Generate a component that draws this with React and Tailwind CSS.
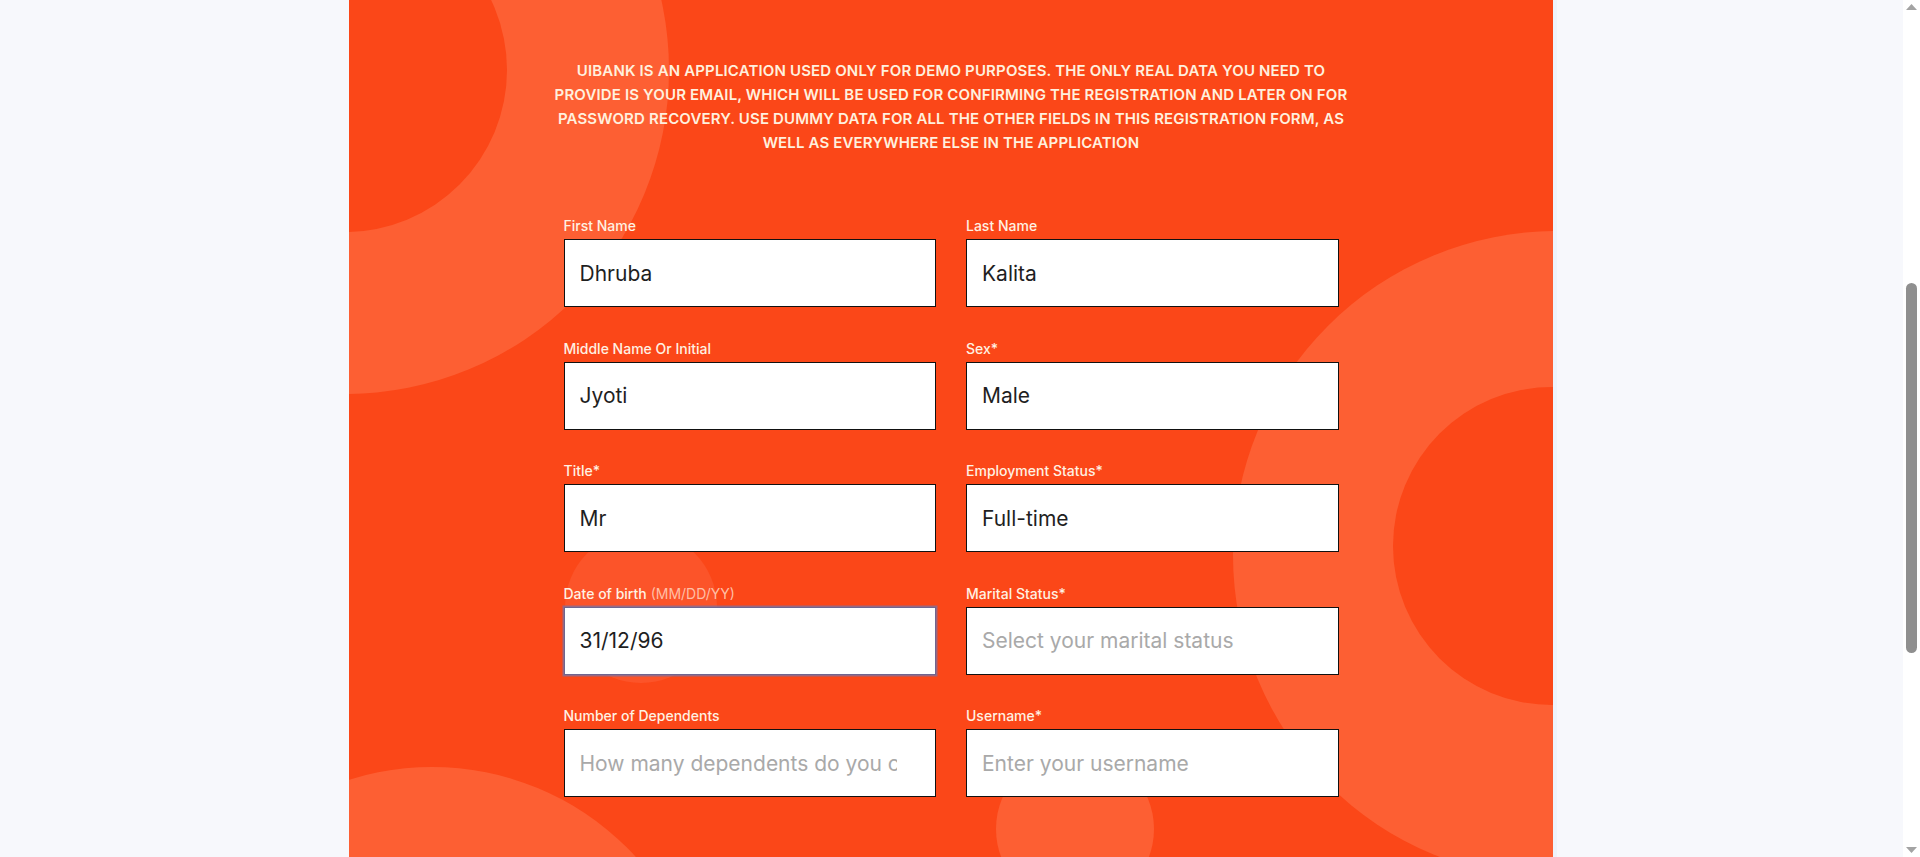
import React from "react";

const font = { fontFamily: "Inter, 'Open Sans', 'Noto Sans', sans-serif" };

function Field({ label, hint, value, placeholder, focused }) {
  return (
    <div className="flex flex-col">
      <label className="mb-[3px] text-[14px] font-medium leading-[20px] text-[#fff1e2]">
        {label}
        {hint ? <span className="font-normal text-[#ffbfa6]"> {hint}</span> : null}
      </label>
      <input
        readOnly
        defaultValue={value}
        placeholder={placeholder}
        className={
          "h-[68px] w-full bg-white pl-[15px] pr-[38px] text-[21px] text-[#1f1f1f] outline-none placeholder:text-[#a9a9a9] " +
          (focused
            ? "border border-[#6f6690] shadow-[0_0_0_1.5px_rgba(125,113,160,0.75)]"
            : "border border-[#111111]")
        }
        style={font}
      />
    </div>
  );
}

export default function App() {
  return (
    <div className="flex h-[857px] w-[1920px] overflow-hidden bg-[#f7f8fc]" style={font}>
      <div className="w-[349px] shrink-0" />
      <div className="relative w-[1204px] shrink-0 overflow-hidden bg-[#fb4718]">
        {/* decorative circles */}
        <div className="absolute left-[-328px] top-[-254px] h-[648px] w-[648px] rounded-full bg-[#fd5f33]" />
        <div className="absolute left-[-166px] top-[-92px] h-[324px] w-[324px] rounded-full bg-[#fb4718]" />
        <div className="absolute left-[884px] top-[231px] h-[648px] w-[648px] rounded-full bg-[#fd5f33]" />
        <div className="absolute left-[1044px] top-[387px] h-[318px] w-[318px] rounded-full bg-[#fb4718]" />
        <div className="absolute left-[216px] top-[531px] h-[152px] w-[152px] rounded-full bg-[#fc5429]" />
        <div className="absolute left-[647px] top-[750px] h-[158px] w-[158px] rounded-full bg-[#fd5f33]" />
        <div className="absolute left-[-193px] top-[767px] h-[552px] w-[552px] rounded-full bg-[#fd5f33]" />

        <div className="relative z-10 flex flex-col items-center pt-[59px]">
          <p className="text-center text-[15px] font-semibold uppercase leading-[24px] tracking-[0.15px] text-[#fff0de]">
            UIBANK IS AN APPLICATION USED ONLY FOR DEMO PURPOSES. THE ONLY REAL DATA YOU NEED TO
            <br />
            PROVIDE IS YOUR EMAIL, WHICH WILL BE USED FOR CONFIRMING THE REGISTRATION AND LATER ON FOR
            <br />
            PASSWORD RECOVERY. USE DUMMY DATA FOR ALL THE OTHER FIELDS IN THIS REGISTRATION FORM, AS
            <br />
            WELL AS EVERYWHERE ELSE IN THE APPLICATION
          </p>

          <div className="mt-[61px] grid w-[775px] grid-cols-2 gap-x-[30px] gap-y-[31.5px]">
            <Field label="First Name" value="Dhruba" />
            <Field label="Last Name" value="Kalita" />
            <Field label="Middle Name Or Initial" value="Jyoti" />
            <Field label="Sex*" value="Male" />
            <Field label="Title*" value="Mr" />
            <Field label="Employment Status*" value="Full-time" />
            <Field label="Date of birth" hint="(MM/DD/YY)" value="31/12/96" focused />
            <Field label="Marital Status*" placeholder="Select your marital status" />
            <Field label="Number of Dependents" placeholder="How many dependents do you currently have" />
            <Field label="Username*" placeholder="Enter your username" />
          </div>
        </div>
      </div>
      <div className="w-[4px] shrink-0 bg-[#edf3fb]" />
      <div className="flex-1" />
      <div className="flex w-[17px] shrink-0 flex-col items-center bg-white">
        <svg width="11" height="6" viewBox="0 0 11 6" className="mt-[4px]">
          <path d="M0 6 L5.5 0 L11 6 Z" fill="#a3a3a3" />
        </svg>
        <div className="mt-[273px] h-[370px] w-[11px] rounded-[6px] bg-[#8f8f8f]" />
        <div className="flex-1" />
        <svg width="11" height="6" viewBox="0 0 11 6" className="mb-[4px]">
          <path d="M0 0 L5.5 6 L11 0 Z" fill="#a3a3a3" />
        </svg>
      </div>
    </div>
  );
}
